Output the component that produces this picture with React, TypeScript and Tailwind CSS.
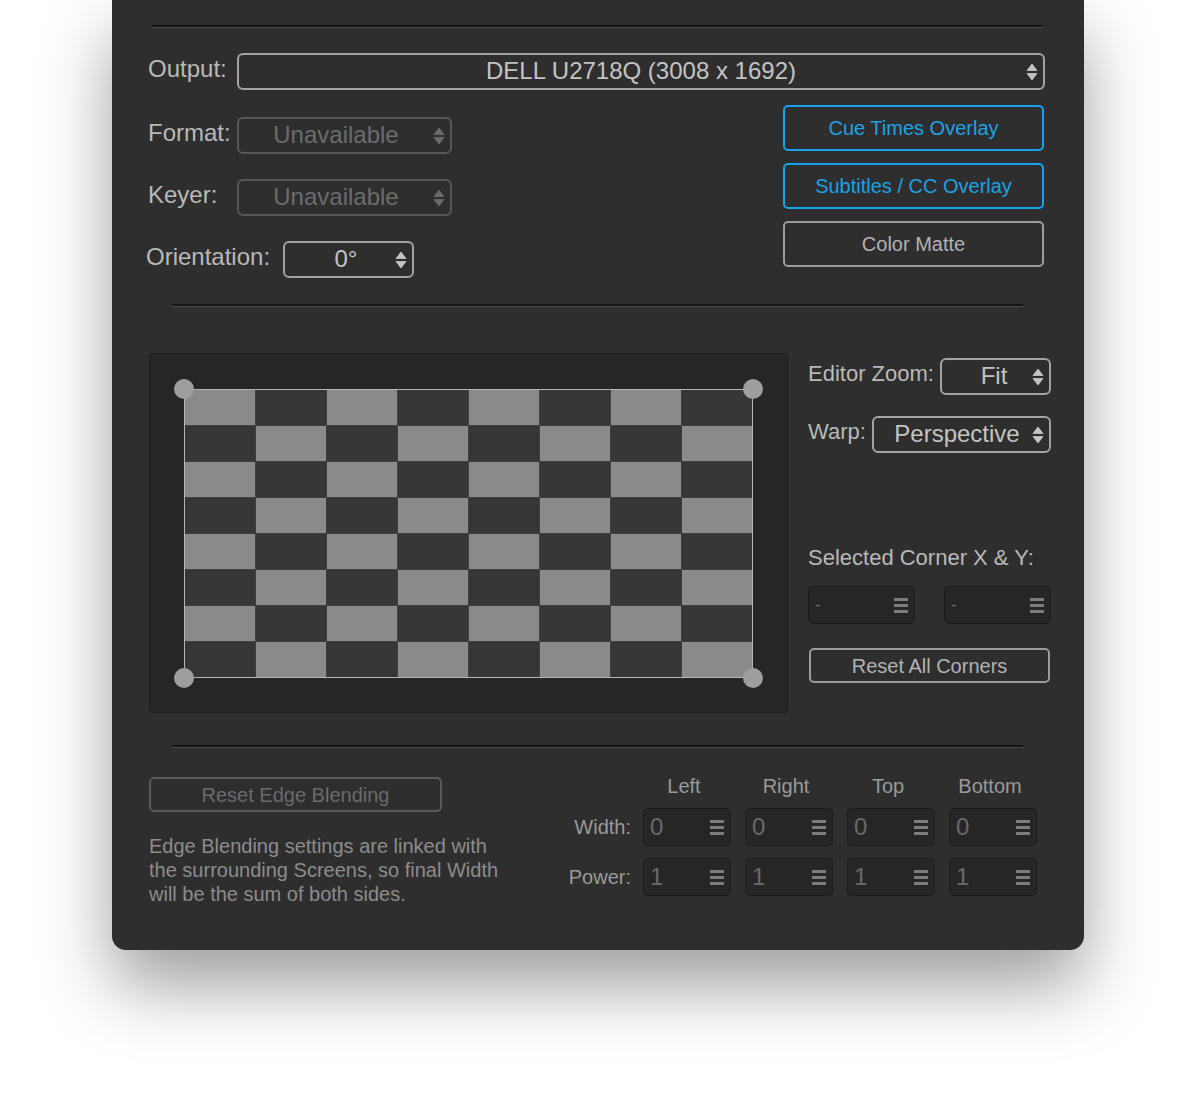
import React from "react";

const font = { fontFamily: '"Liberation Sans", Arial, sans-serif' };

function Arrows({ disabled = false }: { disabled?: boolean }) {
  const fill = disabled ? "#6a6a6a" : "#c4c4c4";
  return (
    <svg width="12" height="20" viewBox="0 0 12 20" className="shrink-0">
      <path d="M6 2 L11 8.5 H1 Z" fill={fill} strokeLinejoin="round" stroke={fill} strokeWidth="0.8" />
      <path d="M1 11.5 H11 L6 18 Z" fill={fill} strokeLinejoin="round" stroke={fill} strokeWidth="0.8" />
    </svg>
  );
}

function Select({
  value,
  className,
  disabled = false,
  textClass = "text-[24px]",
}: {
  value: string;
  className: string;
  disabled?: boolean;
  textClass?: string;
}) {
  return (
    <div
      className={`flex items-center rounded-[6px] border-2 pr-[5px] ${
        disabled ? "border-[#575757] text-[#6c6c6c]" : "border-[#a3a3a3] text-[#c4c4c4]"
      } ${className}`}
    >
      <span className={`mb-[2px] flex-1 text-center leading-none ${textClass}`}>{value}</span>
      <Arrows disabled={disabled} />
    </div>
  );
}

function Separator({ className }: { className: string }) {
  return (
    <div className={className}>
      <div className="h-[2px] bg-[#151515]" />
      <div className="h-px bg-[#4d4d4d]" />
    </div>
  );
}

function NumberField({
  value,
  className,
  small = false,
}: {
  value: string;
  className: string;
  small?: boolean;
}) {
  return (
    <div
      className={`flex h-[38px] items-center rounded-[5px] border border-[#1b1b1b] bg-[#262626] pl-[6px] pr-[6px] ${className}`}
    >
      <span className={`flex-1 leading-none text-[#696969] ${small ? "text-[18px]" : "text-[24px]"}`}>
        {value}
      </span>
      <div className="flex w-[14px] flex-col gap-[3px]">
        <div className="h-[3px] bg-[#7c7c7c]" />
        <div className="h-[3px] bg-[#7c7c7c]" />
        <div className="h-[3px] bg-[#7c7c7c]" />
      </div>
    </div>
  );
}

function OutlineButton({
  label,
  tone,
  className,
}: {
  label: string;
  tone: "blue" | "gray" | "disabled";
  className: string;
}) {
  const toneClass =
    tone === "blue"
      ? "border-[#14a2e8] text-[#19a3e6]"
      : tone === "gray"
      ? "border-[#9c9c9c] text-[#b2b2b2]"
      : "border-[#595959] text-[#6a6a6a]";
  return (
    <div
      className={`flex items-center justify-center rounded-[5px] border-2 text-[20px] leading-none ${toneClass} ${className}`}
    >
      {label}
    </div>
  );
}

function Checkerboard() {
  const cells = [];
  for (let r = 0; r < 8; r++) {
    for (let c = 0; c < 8; c++) {
      const light = (r + c) % 2 === 0;
      cells.push(
        <div key={`${r}-${c}`} className={light ? "bg-[#8a8a8a]" : "bg-[#363636]"} />
      );
    }
  }
  return (
    <div className="relative h-[289px] w-[569px]">
      <div className="grid h-full w-full grid-cols-8 grid-rows-8 gap-px border-[1.5px] border-[#b4b4b4] bg-[#404040]">
        {cells}
      </div>
      {/* corner handles */}
      <div className="absolute -left-[10px] -top-[10px] h-[20px] w-[20px] rounded-full bg-[#9e9e9e]" />
      <div className="absolute -right-[10px] -top-[10px] h-[20px] w-[20px] rounded-full bg-[#9e9e9e]" />
      <div className="absolute -bottom-[10px] -left-[10px] h-[20px] w-[20px] rounded-full bg-[#9e9e9e]" />
      <div className="absolute -bottom-[10px] -right-[10px] h-[20px] w-[20px] rounded-full bg-[#9e9e9e]" />
    </div>
  );
}

export default function App() {
  const sides = ["Left", "Right", "Top", "Bottom"];
  const label = "mb-[6px] text-[24px] leading-none text-[#b9b9b9]";

  return (
    <div className="h-[1099px] w-[1180px] overflow-hidden bg-white" style={font}>
      <div className="ml-[112px] flex h-[950px] w-[972px] flex-col rounded-b-[14px] bg-[#2e2e2e] shadow-[0_36px_70px_rgba(0,0,0,0.38)]">
        {/* top separator */}
        <Separator className="ml-[40px] mr-[41px] mt-[25px]" />

        {/* Output */}
        <div className="ml-[36px] mr-[39px] mt-[25px] flex items-center">
          <span className={`w-[89px] ${label}`}>Output:</span>
          <Select value="DELL U2718Q (3008 x 1692)" className="h-[37px] flex-1 pl-[17px]" />
        </div>

        {/* Format / Keyer / Orientation + overlay buttons */}
        <div className="ml-[36px] mr-[40px] mt-[15px] flex justify-between">
          <div className="flex flex-col pt-[12px]">
            <div className="flex h-[37px] items-center">
              <span className={`w-[89px] ${label}`}>Format:</span>
              <Select value="Unavailable" disabled className="h-[37px] w-[215px]" />
            </div>
            <div className="mt-[25px] flex h-[37px] items-center">
              <span className={`w-[89px] ${label}`}>Keyer:</span>
              <Select value="Unavailable" disabled className="h-[37px] w-[215px]" />
            </div>
            <div className="-ml-[2px] mt-[25px] flex h-[37px] items-center">
              <span className={`w-[137px] ${label}`}>Orientation:</span>
              <Select value="0°" className="h-[37px] w-[131px] pl-[12px]" />
            </div>
          </div>
          <div className="flex w-[261px] flex-col gap-[12px]">
            <OutlineButton label="Cue Times Overlay" tone="blue" className="h-[46px]" />
            <OutlineButton label="Subtitles / CC Overlay" tone="blue" className="h-[46px]" />
            <OutlineButton label="Color Matte" tone="gray" className="h-[46px]" />
          </div>
        </div>

        <Separator className="ml-[60px] mr-[61px] mt-[26px]" />

        {/* Warp editor */}
        <div className="ml-[37px] mr-[33px] mt-[46px] flex">
          <div className="flex h-[360px] w-[639px] items-center justify-center rounded-[4px] border border-[#1d1d1d] bg-[#262626]">
            <Checkerboard />
          </div>
          <div className="ml-[20px] flex flex-1 flex-col pt-[5px]">
            <div className="flex h-[37px] items-center justify-between">
              <span className="-mt-[6px] text-[22px] leading-none text-[#b9b9b9]">Editor Zoom:</span>
              <Select value="Fit" className="h-[37px] w-[111px] pl-[14px]" />
            </div>
            <div className="mt-[21px] flex h-[37px] items-center justify-between">
              <span className="-mt-[6px] text-[22px] leading-none text-[#b9b9b9]">Warp:</span>
              <Select value="Perspective" className="h-[37px] w-[179px] pl-[8px]" />
            </div>
            <span className="mt-[94px] text-[22px] leading-none text-[#b9b9b9]">Selected Corner X &amp; Y:</span>
            <div className="mt-[17px] flex justify-between">
              <NumberField value="-" small className="w-[107px]" />
              <NumberField value="-" small className="w-[107px]" />
            </div>
            <OutlineButton label="Reset All Corners" tone="gray" className="mt-[24px] ml-px mr-px h-[35px]" />
          </div>
        </div>

        <Separator className="ml-[60px] mr-[61px] mt-[32px]" />

        {/* Edge blending */}
        <div className="ml-[37px] mr-[47px] mt-[28px] flex items-start justify-between">
          <div className="flex w-[360px] flex-col">
            <OutlineButton label="Reset Edge Blending" tone="disabled" className="mt-px h-[35px] w-[293px]" />
            <p className="mt-[22px] text-[20px] leading-[24px] text-[#8c8c8c]">
              Edge Blending settings are linked with
              <br />
              the surrounding Screens, so final Width
              <br />
              will be the sum of both sides.
            </p>
          </div>
          <div className="grid grid-cols-[auto_88px_88px_88px_88px] items-center gap-x-[14px] gap-y-[12px]">
            <div />
            {sides.map((s) => (
              <span key={s} className="pr-[6px] text-center text-[20px] leading-none text-[#9a9a9a]">
                {s}
              </span>
            ))}
            <span className="-mr-[2px] text-right text-[20px] leading-none text-[#9a9a9a]">Width:</span>
            {sides.map((s) => (
              <NumberField key={`w-${s}`} value="0" className="w-full" />
            ))}
            <span className="-mr-[2px] text-right text-[20px] leading-none text-[#9a9a9a]">Power:</span>
            {sides.map((s) => (
              <NumberField key={`p-${s}`} value="1" className="w-full" />
            ))}
          </div>
        </div>
      </div>
    </div>
  );
}
